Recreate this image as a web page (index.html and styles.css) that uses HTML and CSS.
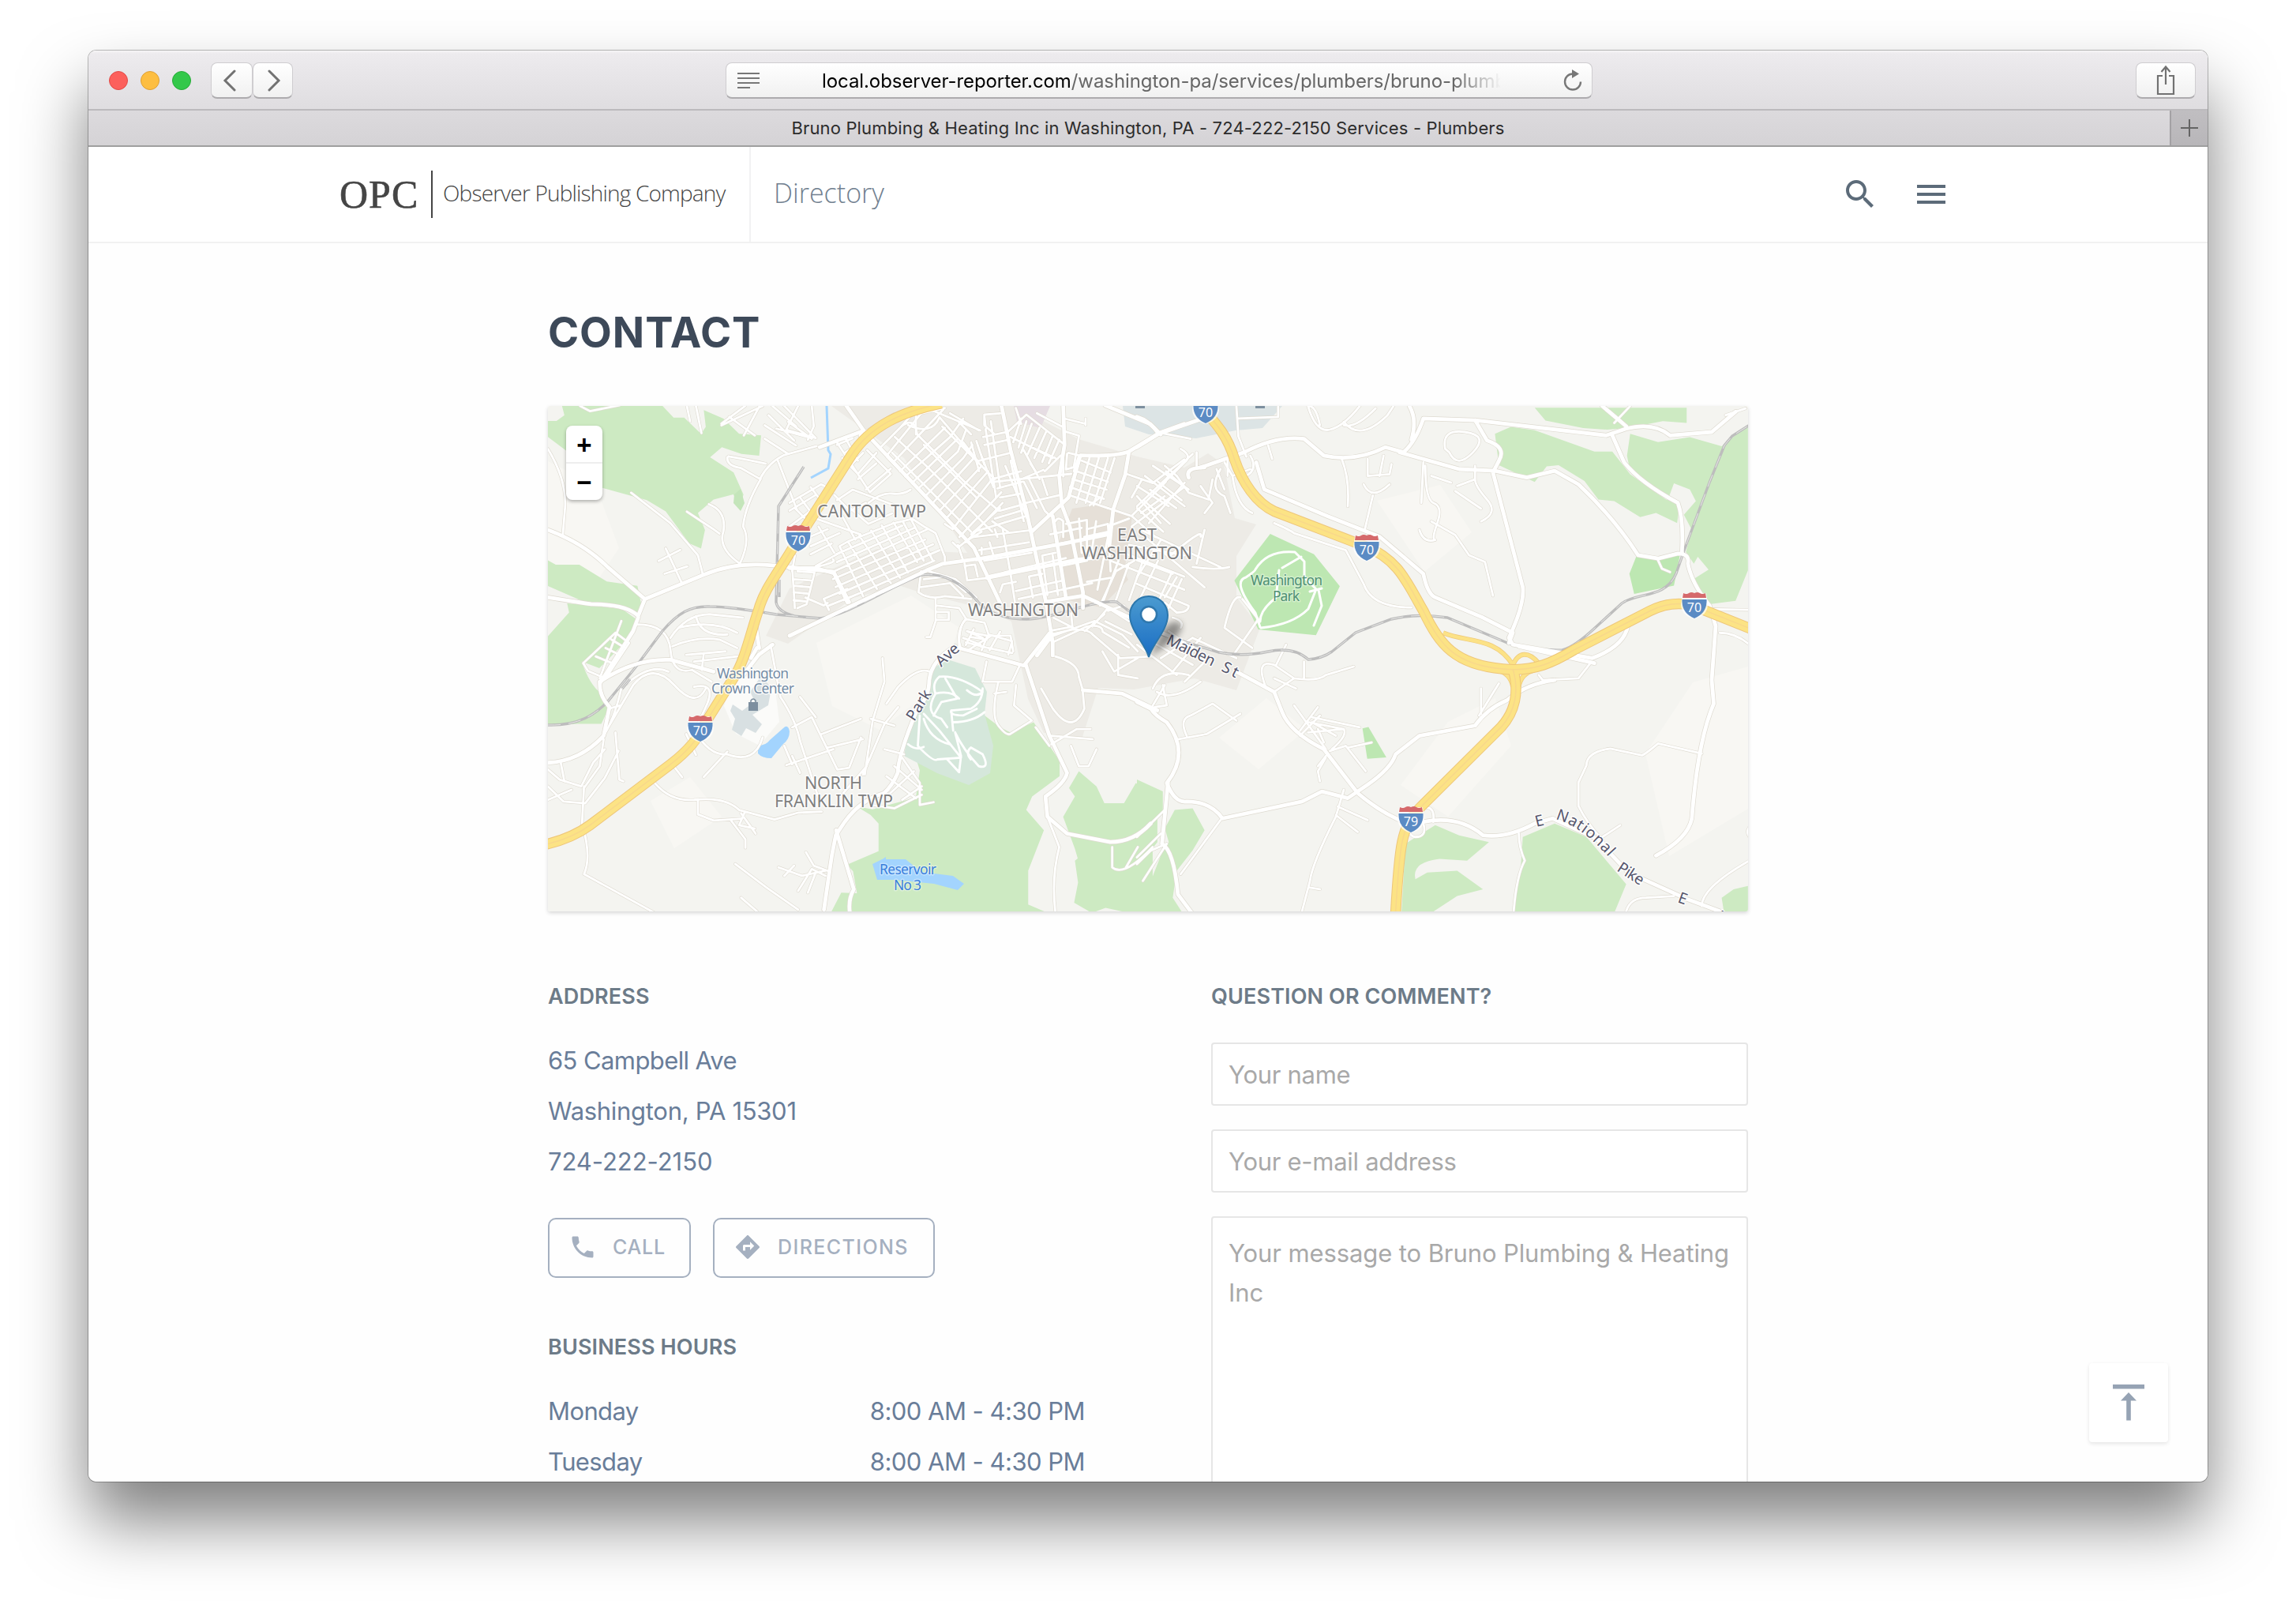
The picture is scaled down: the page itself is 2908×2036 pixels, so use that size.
FILE: index.html
```html
<!DOCTYPE html>
<html lang="en">
<head>
<meta charset="utf-8">
<title>Bruno Plumbing &amp; Heating Inc in Washington, PA</title>
<link rel="stylesheet" href="styles.css">
</head>
<body>
<div class="window">
  <div class="toolbar">
    <div class="lights"><i class="light red"></i><i class="light amber"></i><i class="light green"></i></div>
    <div class="nav">
      <span class="tool back"><svg width="18" height="28" viewBox="0 0 18 28"><path d="M15 2 3 14l12 12"/></svg></span>
      <span class="tool forward"><svg width="18" height="28" viewBox="0 0 18 28"><path d="M3 2l12 12L3 26"/></svg></span>
    </div>
    <div class="address-bar">
      <svg class="reader" width="28" height="20" viewBox="0 0 28 20"><path d="M0 1h28M0 7h28M0 13h28M0 19h16"/></svg>
      <span class="url"><b>local.observer-reporter.com</b>/washington-pa/services/plumbers/bruno-plumb</span>
      <svg class="reload" width="24" height="28" viewBox="0 0 24 28"><path class="ring" d="M12 5.500A10 10 0 1 0 22 15.500"/><path class="tip" d="M11 0v11l9-5.500z"/></svg>
    </div>
    <span class="tool share"><svg width="24" height="40" viewBox="0 0 24 40"><path d="M8 14H2v23h20V14h-6M12 25V3M6.500 9 12 2.500 17.500 9"/></svg></span>
  </div>
  <div class="tabs">
    <div class="tab"><span>Bruno Plumbing &amp; Heating Inc in Washington, PA - 724-222-2150 Services - Plumbers</span></div>
    <div class="new-tab"><svg width="22" height="22" viewBox="0 0 22 22"><path d="M11 0v22M0 11h22"/></svg></div>
  </div>

  <header class="site-header">
    <div class="brand"><span class="opc">OPC</span><i class="bar"></i><span class="company">Observer Publishing Company</span></div>
    <div class="section-name"><span>Directory</span></div>
    <div class="header-icons">
      <svg width="48" height="48" viewBox="0 0 24 24"><path d="M15.500 14h-.79l-.28-.27C15.410 12.590 16 11.110 16 9.500 16 5.910 13.090 3 9.500 3S3 5.910 3 9.500 5.910 16 9.500 16c1.610 0 3.090-.59 4.230-1.570l.27.28v.79l5 4.990L20.490 19l-4.990-5zm-6 0C7.010 14 5 11.990 5 9.500S7.010 5 9.500 5 14 7.010 14 9.500 11.990 14 9.500 14z"/></svg>
      <svg width="48" height="48" viewBox="0 0 24 24"><path d="M3 18h18v-2H3v2zm0-5h18v-2H3v2zm0-7v2h18V6H3z"/></svg>
    </div>
  </header>

  <main class="page">
    <h1>CONTACT</h1>
    <div class="map">
      <svg class="map-canvas" width="1520" height="640" viewBox="0 0 1520 640">
        <defs>
          <g id="shield">
            <path class="shield-edge" d="M-15-16h30l2 14q0 14-17 19-17-5-17-19z"/>
            <path class="shield-red" d="M-14-16q4 2 7 0 3-2 7 0 4-2 7 0 3 2 7 0l1 6h-30z"/>
            <path class="shield-blue" d="M-15.500-8h31q1 17-15.500 24Q-16.500 9-15.500-8z"/>
          </g>
          <linearGradient id="pinfill" x1="0" y1="0" x2="0" y2="1"><stop offset="0" stop-color="#4b9bd0"/><stop offset="1" stop-color="#1a6dc4"/></linearGradient>
          <filter id="soft" x="-50%" y="-50%" width="200%" height="200%"><feGaussianBlur stdDeviation="4"/></filter>
          <path id="national" d="M1276 523C1300 530 1320 545 1346 574"/>

          <g id="minor-west" transform="matrix(.4974 0 0 .4273 -14 -14)">
            <path d="M28 160Q75 250 72 330L66 415M110 33l25 15 75-17M240 290l100 90 70 95 12 55M382 346l65 50 18 15M438 324q45 20 37 80-15 50 42 96M485 185q-2 25 35 32l48 32M488 182q60 12 95 22M568 249Q590 200 630 178L712 152M570 249Q530 330 525 390q20 40-8 110M612 190l50 150M28 600"/>
            <path d="M310 492l55-33M325 530l58-22M328 455l40 100M405 33l14 80M382 33l8 45M470 85l60-52M490 65l65 55M527 120l40-87M575 33L470 90M580 90l80 60M590 60l65 75M600 33l60 60M630 33l80 95M580 130l60 45M610 100l80 25M640 80l60 50M665 33l-30 70 75 25M700 33l5 60-15 40"/>
            <path d="M255 680q80 0 85 75t55 60l50 35M340 720q40-70 100-70l85 10M345 745q60-30 120-20l45 25M405 655q10 60 80 55M360 690q90-25 150 15M380 770l100-10M400 790l110-15M425 765l-5 50"/>
            <path d="M200 705l35 30-60 105-45-22-12-23zM190 725l35 25M175 750l35 20M150 775l38 18M215 670L160 840"/>
            <path d="M28 1160l40 45 55 5 50-75 35-80M28 1110l30 30 55 20 30-70 30-40M60 1085l10 60M120 1160l-5 110q25 100 5 150l180 115M170 1020l-10 80-40 65M200 1000l10 140 10 5M28 1200l60-30M165 1018L245 860q50-70 105 0t80 10M230 855q60-60 105-35M215 870q-20 100-50 148M183 930l30-10"/>
            <path d="M380 1005l25 62M345 1095l25 38M405 1000q35 70 80 65 70 30 90-50M425 1132l60-75M400 865q60-15 30 60l-30 75M300 1150q40 55 100 50 80-10 115 30l90 28 60-20 60-3M410 1198v45l40 18 70-5M495 1262l36 55v25M520 1240l37 60M530 1235l-15 40 40 10"/>
            <path d="M620 895q40 70 50 130l50 180M595 740l25 155M630 1040l20 55M635 1097l120-47M670 895l40 60M650 985l50-30 65 155M725 1005l100-45M740 1045l90-25M850 960l60 20M830 1125l55-150 35-50M885 1050l50 15M880 780l5 70-30 115-20 160M1000 820q-30-15-80 45l-30 50M765 1110l30-5 30-90M650 1070l20 50M780 1180l60-80"/>
            <path d="M890 1130l75 65M910 1100l70 70M930 1075l45 75v65l35-8M900 1180l60-65M930 1200l50-40M850 1215l60 10 70-40"/>
            <path d="M505 1390l80 70 80 65M520 1490l40 40M615 1400l60 25 60-15M655 1395l-25 30M665 1470l35-65 35 20M685 1355l20 40 35 15M690 1475l20-60"/>
            <path d="M1075 745q0-70 20-80l45 10 10 35 60 20-10 40M1095 700l40 20M1085 720l45 20M1100 755l55-40M1130 745l80 20M1140 850h70l20-50M1145 790l-10 60M1175 850q-20 100 0 130t30 25l55-40M1165 885l30-5M1220 860l-5 60 45 45M1270 985l35 55M1310 1010l105 10M1310 1035l65-45 35 0M1360 1040l20 60h25l20-50"/>
            <path d="M1300 1250l30 90q-20 90-10 190M1465 1340v60q30 30 103-60M1500 1400l30-60"/>
            <path d="M1310 710l55-15q40 0 50 15l70 70 80-5M1365 690l-50-30M1395 700l50-50M1320 775q60 20 60 60l10 40M1390 880l4 50q-30 80-80 0l-30-60M1440 760l30 60 60-40M1480 770v60l50 10M1300 720l120-50 70 40 40 50"/>
          </g>
          <g id="golf-paths" transform="matrix(.4974 0 0 .4273 -14 -14)">
            <path d="M1025 835q50-5 110 45-15 20-40-5M1025 835q-20 20-10 50 40-10 60 15M1015 885q-30 60 15 75l15 25M1040 840l30 60-40 10-20 40M1135 870q0 40-30 60l-50 5q-5 15 30 15l35-20M1060 970q50 0 80-30M1055 935l5 60M975 950l-5 90q40 50 50 40l60-5-55-80-40-50M985 960q15 60 65 75M945 1035q20 20 40 8M1065 1000l15 70-5 48-30-38M1065 1000q20 50 60 100 30 10 10-35l-30-20q-15 15 0 35"/>
          </g>
          <g id="major-west" transform="matrix(.4974 0 0 .4273 -14 -14)">
            <path d="M28 400Q120 440 180 510L275 605l150-72q80-40 180-27l150 18 40 90M28 600q80 15 110 20 90 0 120 35l17-50M258 660L245 700l-85 155q0 40 25 70L170 1010q-60 75-142 80M28 1150"/>
            <path d="M160 850q90-70 180-65l110 35"/>
            <path d="M545 780l15-30M560 1100M720 155l110-48M600 740L565 770l-40 60M558 690l8 60"/>
            <path d="M1075 750l165 52 65-95M1065 745q-60 40-66 100 0 50-30 85-50 140-50 190-15 40-35 60-60 20-100 85l-23 40-10 60-20 160M762 1290l45 175q-15 30-10 70"/>
            <path d="M1245 800l60 210 45 110q-5 30-55 70l5 60 50 50 110 25q60 0 103-55"/>
            <path d="M1390 875l100 10 90 50"/>
          </g>
          <g id="minor-town" transform="matrix(.3333 0 0 .3333 306 -4)">
            <path d="M190 545l32-18 170-68 75-18 50 33M178 575l250-108M180 605l295-130M170 640l355-160M165 670l350-150M175 700l370-162M190 725l380-165M205 750l250-110 95-40M130 745l90-38M150 770l100-40M190 545l90 190M222 527l110 180M265 505l120 180M310 485l110 180M350 465l100 180M395 455l90 150M430 450l80 150M460 440l85 160M520 475l35 20 35 90v15M130 745l20 42"/>
            <path d="M10 620l10 160M30 640l65 5-30 120-35 15M15 670l65 5M15 695l60 5M15 720l55 5M15 750l50 5M60 740l70 30 15-10M95 625q90-20 70-30M100 620l90-50"/>
            <path d="M0 380l120-70q30 10 20 30M0 410l100-60M20 400l60 60M40 360l60 80M80 320l30 40M0 470l80-60M80 545l110-50M80 575l80-40M75 510l70-30M100 440l170 60M180 370l60-40 160 60M170 350l60 60 60-30M300 380q50-40 90-35t70-15M230 400l70 60 90-40M20 580l-10 60M110 470l60 100M200 430l50 90"/>
            <path d="M180 150l125 190 80-70-90-90M200 210l60 60 70-80M230 240l50-50M260 290l70-60M290 330l95-80M210 130l50 90M180 160l60-25M210 190l60-40"/>
            <path d="M345 170l80-80 60-70M370 200l130-160 90-20M395 225l190-200M420 260l170-165M440 280l170-150 50-70M465 305l170-165M490 325l150-140 30-80M520 350l140-140 35-50M545 380l155-170M570 410l160-170M595 440l160-180M620 480l150-190M645 510l160-170M670 530l140-150M690 500l110-100"/>
            <path d="M425 90q50-40 60 30l60 60 120 120 130 110M450 85q90 40 120-30l65 75 80 90M400 130l120 110 170 170 80 80M390 190l300 300M370 205l280 290M480 20v100M510 160l200 200M580 90l200 200M545 30l180 75M610 40l110 65M640 70l50 50M660 150l60 80"/>
            <path d="M745 90l-5-45 60-5M765 70l35 250M745 100l40 260M735 130l95-20M740 160l95-20M720 220l120-30M770 290l110-30M790 325l95-25M800 360l80-15M800 410l90-25M780 440l100-30M740 45v40l40 35M690 150l30 110M710 145l30 90M725 190l50 130"/>
            <path d="M830 110l70-65 140 110M840 130l60 30 100 50M880 60l-30 90M900 70l-30 100M920 80l-40 110M950 95l-45 100M975 110l-45 100M1000 125l-40 100M1025 140l-40 90M880 150l130 60M890 180l60 110M940 40l95 50M1050 110l50 15-20 120-30 8 5-60M860 20l20 60M1045 60l80 20v-20M1125 80v5"/>
            <path d="M780 300l290-30M870 295l95-40M890 300l50 100M910 290l60 120 20 20M960 290l20 60M900 380l130-30M935 260l-20-30M970 260l60-60M820 240l100 240M840 220l50 230M770 450l60 40M700 490l200-60M680 520l50-30M700 510l210-25M720 560l190-30M740 600l180-30M730 550v25M760 530l15 50M810 480l30 170 20 130M750 660l300-70M860 715l180-40M870 745l280-60M910 660l15 80M910 660l50-10M960 580l20 150M1000 580l20 150M960 580l50-10M1130 680l90-15M1030 620l100-20M810 690l50-10M800 720l10-30M780 480l10 30"/>
            <path d="M1090 260l120 40M1075 290l130 40M1065 320l130 45M1110 220l110 45M1060 350l150 50M1140 210l-50 170M1175 210l-50 170M1210 210l-55 180M1235 210l-55 170M1060 190l40 10-20 60M1040 200v80"/>
            <path d="M1280 270l100 35 120-90M1300 360l40-70M1210 400l90 30 130-130M1300 430l90 80M1320 400l100 90M1345 370l100 90M1370 330l100 70M1400 300l90 70M1430 260l70 60M1290 440l-80 30M1300 470l200-150M1180 360l-40 30M1230 410l-60 300M1210 460l10 180M1165 450l-20 140M1130 480l80-20M1120 510l90-20"/>
            <path d="M1220 600l280 110M1240 640l70-40M1270 570l230 90M1290 540l210 40M1400 600l-90 190M1350 580l-60 170M1450 650l-60 130M1490 670l-50 110M1240 640l-60 130M1250 600l-60 160M1290 610l-50 140"/>
            <path d="M1100 440l10 130M1130 450v120M1000 540l110-20M990 500l120-25M1010 450q10-20 30 0v60M1050 460l80-15"/>
            <path d="M665 610l10 65 80-10M665 620l40-5 10 45M640 540l20 60M620 530l20 20 50-40M590 460l30 20M500 640l-10 80q40 30 100 15l100 10M510 670l90-10 70 60M530 640l100 30 80 70M500 700l110-15 50 50M555 740v90l-20 60h-15M555 770l90 10 25 40M560 795h45v30h-50"/>
            <path d="M670 820q-40 50-20 110M680 870l70 15 90 0 10 60M690 890l60 10M670 910l60 15M700 860l-30 60M750 890l-20 50M800 870l-40 70"/>
            <path d="M1000 910l130-60q60-10 60 20l100 60M1070 800l5 50-80 15M1150 850l60-70 140 60M1180 760l110 70M1210 790l60-20 40 50M1200 830l100 50"/>
          </g>
          <g id="major-town" transform="matrix(.3333 0 0 .3333 306 -4)">
            <path d="M215 10l70 100L700 550l100 210M270 125l130-80M0 885l140-68 380-180 60-25 130-18"/>
            <path d="M710 595l330-60 170-35M750 665l350-70 50-5M980 755l135-22 385 180"/>
            <path d="M805 10l35 170 60 230 75 350 25 150 0 50M1000 880l-60 80M1040 10l5 150-20 120 10 110 30 80 50 250v60M1000 430l50 310M920 490l140-130 45-160q130 5 185-15l115-70 95-35M1200 10l170 70 40 40M1290 185l-15 90-45 130-15 140"/>
            <path d="M0 628l100 0 70 20 50 110"/>
          </g>
          <g id="minor-east" transform="matrix(.5038 0 0 .4273 746 -14)">
            <path d="M0 330L90 230l50-55M0 270l80 60M20 240l100 90M40 210l90 70M0 300l60 80M10 350l60-50M30 380l90-120M70 210l30 30M0 190"/>
            <path d="M100 240l30 50 50 20 10-60M160 270l30 50-20 30M210 220q-30 60 10 80l15 50M150 170v40M50 110l85 20M110 160q30 20 10 40l-60 70M200 220l20 60"/>
            <path d="M250 33l5 90 20 60M255 70l100-5v-30M330 150l10 40M430 33q20 80 55 70t75-70M460 90q-10-60-30-57M520 80q40 60 110-20l15-27M600 40q-50 60-80 50"/>
            <path d="M515 190q20 60 15 140M580 190v50l55-5 5-30M610 240l10-60M570 265q20 50 65 0M593 298l-20 100M720 200l-5 120M725 210q0 100 20 110 25 10 10 60t-5 50q-30 10-40-30M800 285l65 52M805 270l45-20q0 20 30 60t-15 65M740 240l50 20M850 210v40M740 375l60 40 35 60 40 20 20 100M775 160q-10-60 50-50t20 60-60 0z"/>
            <path d="M1240 33l-40 50M1480 60l50-20"/>
            <path d="M240 240q10 90 50 110M220 200l20 40 45-20M228 190v50M285 180q20 40-10 60"/>
            <path d="M10 400l200 110M0 490l90 40M20 420l150 150M60 430l-60 110M140 510q60 10 92 0M100 540l-30 60M150 500l20-100M80 480q90-90 80-60M0 560l130 65q0 20-30 20l-30-30M90 660q30 10 20 30"/>
            <path d="M345 380q40 20 50 30l130 50 45 100q20 70 120 70M260 600q-20-10-40 90l70 60M265 605l40 60-65 110M215 640M140 720l110 60"/>
            <path d="M0 740l100 90M20 720l120 80M80 700l80 70M60 780l80-60M90 820l70-100M120 850l60-70M40 870q20-60 90-40M50 880q40 30 110-30M40 920l30-60M45 925l30-5-10-60"/>
            <path d="M325 870q-30-90 20-70l50 40-50 40M395 840q60 10 80-10l70-25M350 800l25-60M345 840l55 30M420 840v-50"/>
            <path d="M395 920l80 130M455 925l-45 70M440 955l120 30M430 970l90 20q10 20-30 60M430 1000l90-10M440 970l60 40M455 990l15 40M410 1010l50-60M475 1075l-20 40 5 30M485 1055l40-15 50 75M530 1045l60-15M455 1100l20-30"/>
            <path d="M105 1020l70-15 85-60M125 1010q-20-50 10-60l55-35 60 50M0 1310l70-80M0 1370l60-70M15 1440l60-110-40 20-35 40M210 1260l-100 160M520 1170l-20 80q-60 140-65 190l-20 90M505 1220l75 40M500 1245l55 50M435 1460l25 5"/>
            <path d="M865 945v-75M860 950l50-95M1010 830l10 15 90-5 30-45M720 1225q30-10 25 40M720 1270q10 40-20 40-10 0-20-20"/>
            <path d="M1420 1063l-110-30q-30 30-40 35l-80-20q-60 10-60 50l-20 50 0 70q20 50 60 100l15 40M1170 1310l45-35M1465 705q40 0 75 35M1450 635l90 2M1310 490l10 25 20 10M1540 1380q-120 80-120 135M1230 1530q10-40 50-40l70-5M1540 1280q-10 15 0 30"/>
            <path d="M960 1300q0 40 15 80-20 40-28 150"/>
          </g>
          <g id="major-east" transform="matrix(.5038 0 0 .4273 746 -14)">
            <path d="M0 155l55-40 110-45M0 65q30 10 55 50M160 215l110-45q80-50 150-40l50 50q80 20 155-25l45 15q30-30 50-100l130 5 330 45 50-20q70-20 110 20l105-10q40-40 60-60M685 33q20 40 5 100M660 170l150 50 90 5 80 20 70-20 60 40q90 100 150 210l50 10 50-15q30 0 25 30 10 60 55 125l15 60-10 160 5 70q-40 110-55 340-10 60-90 110M850 75l30 60q50 20 30 60l-15 35 75 340q5 50-35 150l10 20 200 40q90-40 90-110"/>
            <path d="M1170 33l40 40 20 20M1195 120l30 80q40 60 135 120 15 50 10 150"/>
            <path d="M130 245q-10-30 40-30M300 200l20 80 160 80 130 60 110 110q10 60 30 70l120 60 75 45-10 30M960 745l190 50M250 820l95 60 20 60q20 60 105 110l85 130q70 70 140 95M720 1265q90-20 150 40 60 10 130-35l45-15 110 60 80 100 150 80 80 35"/>
            <path d="M0 910l35 20q10 20 40 40 60 90 0 180 20 60 50 55 60 0 90 50l200-50 50-30 65 20 50-40q60-50 70-90l60-55 140-30q30-50 80-75 50-50 120-60"/>
            <path d="M78 1150l-15 180q30 20 40 150l35 55"/>
          </g>
          <g id="rail">
            <path d="M0 404C40 405 60 390 75 375L110 332 145 285C165 262 180 253 205 254 230 254 260 259 289 264L345 269C380 265 430 230 473 214 500 210 525 225 543 246 555 262 580 270 606 270 640 270 690 245 720 248L776 289 850 312Q880 318 912 311T963 321Q980 320 993 311L1023 287 1068 270Q1100 262 1139 268L1215 300Q1250 310 1285 309 1300 305 1325 282L1360 250C1380 235 1415 245 1429 212L1439 183 1471 97 1490 50 1500 38 1522 24M324 77L292 127 289 248Q290 260 312 266M293 220v22M94 358l10-12"/>
          </g>
          <g id="interstate">
            <g transform="matrix(.4974 0 0 .4273 -14 -14)"><path d="M20 1333C60 1322 100 1305 135 1275L340 1095C385 1055 410 1020 430 970L500 840C530 790 545 700 565 635 580 570 620 520 665 427L800 180C850 90 930 50 1030 25"/></g>
            <g transform="matrix(.5038 0 0 .4273 746 -14)"><path d="M150 20C190 75 225 110 245 190 265 260 300 320 345 345L577 450C660 490 680 560 720 640 760 740 800 800 920 812 1000 822 1050 790 1100 755L1290 640C1340 610 1390 615 1420 635L1545 694"/><path d="M945 812C962 880 950 940 915 985L710 1225C665 1280 660 1330 650 1540"/></g>
          </g>
          <g id="ramps" transform="matrix(.5038 0 0 .4273 746 -14)"><path d="M770 705C830 735 900 715 945 800 960 760 985 760 1010 795M905 815q35 10 40 50M1000 815q-35 10-40 50"/></g>
        </defs>

        <rect class="land" width="1520" height="640"/>
        <g class="relief">
          <path d="M0 70l60 30 30 80-40 60-50-30zM340 300l120-60 60 40-20 70-80 60-60-30zM130 500l50-30 40 50-60 40zM1080 480l60-80 60-30 20 60-80 90zM1390 440l60-90 70-20v180l-100 60zM1050 120l80-20 40 60-60 50zM850 420l60-50 50 40-60 50z"/>
        </g>
        <path class="urban" d="M359 0H590l82 42 74 22 60 14 30-18 20 14 14 68 27 8-25 40v52l30 39-30 79-53-15-77 14-45-2-20 62-49-5-20-43-21-98-30-15-80-20-30-10-60 15-83 58-28-10 30-60 110-50 115 5-80-120z"/>
        <path class="industry" d="M728 0h202l-25 28-34 3-50 10-60-5-30-10z"/>
        <path class="campus" d="M590 0h46l-12 28-30-8z"/>
        <path class="civic" d="M664 130l34-5 42 15-10 70 5 10-35 35-46-10-10-65z"/>
        <g class="wood">
          <path transform="matrix(.4974 0 0 .4273 -14 -14)" d="M64 33h256l28 34h27l43 48 12-20-5-50 50 25 40 45 56 5-5 60-45-5-50-20-30 30 60 45 25 65-8 35-18-35-50 15-40 40 18 50-10 55-30-15-60-95-48-33-125-40-50-80-80-70-17-10-35-35H50l20-17zM28 490l20 13h60l70 50 78 13 10 55-10 30-50-30-80-5-98-50zM28 715l54-70-5-27 60 5 80 12 37 30-15 50-80 95-45-20q20 70 50 95l20 40-20 50-60 0-76 5zM1140 950l40 35 25 15 60-30 66 115v45l-70 60-15 40 45 60-40 120v100l60 30 28 25H735l40-90 40 2-10-65-15-20 80-40V1270l-20-25-35-25 40 8 110-35 10-80-8-30zM1340 1250l30-60 -15-25 25-50 45 45 20 50h50l30-60 55 35v140l-40 60-60 20-100-20-10-40zM1370 1380l65-60h133v215h-60l-60-15-35 15-45-30 10-60z"/>
          <path transform="matrix(.5038 0 0 .4273 746 -14)" d="M1000 38h382v45l-60-5-90 20-50 5-60-5-95-22zM900 115L940 95 1000 105 1150 168H1195L1240 235 1330 310 1365 320 1358 380 1305 350 1265 362 1200 315 1160 310 1125 255 1060 208 1030 212 1000 258 910 208zM1240 115L1310 140 1390 125 1470 152 1536 90V520L1505 610 1440 620 1400 545 1437 518 1410 480 1400 500 1380 465 1395 400 1375 355 1405 315 1390 280 1350 262 1338 300 1240 225 1232 180zM0 1140l65 35 0 60-65 60zM95 1230l45-5 30 65-30 60-40 60-10 80 30 55H0v-80l40-40 20-60 20-40-10-40zM675 1330l75-55 60 30 75 20-55 55-70-5q-70 10-60 60l30-20 75-5 65 55-65 20-65 50h-75zM970 1310l80-40 80 40 100 140-30 85H945l20-140zM1470 1490l30-25 36-10v80h-60z"/>
        </g>
        <g class="park">
          <path transform="matrix(.5038 0 0 .4273 746 -14)" d="M335 412l110 60 65 95-60 145-145-17-60-145zM1255 480l110-5-15 90-100 25-12-60zM567 988l15-4 45 90-48 4z"/>
          <path class="glade" d="M236 112l8-7 5 18-5 10-9-10z"/>
        </g>
        <path class="golf" d="M506 321l35 11 15 30-3 28 11 40-4 35-27 15-40-15-42-22 5-30 27-51 5-30z"/>
        <g class="water">
          <path d="M298 408q6-6 8 4 0 10-8 16l-15 18q-12 0-17-6v-10q10 0 15-7zM411 580l12-6h30l20 16 40 5 14 10-8 8-30-8-50-5h-22zM422 575l6-4v10z"/>
          <path class="stream" d="M353 0l2 56 3 5-3 18-22 12"/>
        </g>
        <g class="mall"><path d="M233 350l25-10 30 20 5 40-25 30-30-15-15-35z"/></g>
        <path class="mall-building" d="M234 378l12 8 16-12-6-12 14-20 13 15-4 22-20 12 12 12-8 11-12-6-6 10-12-8 4-14-6-10z"/>

        <g class="casing minor"><use href="#minor-west"/><use href="#minor-town"/><use href="#minor-east"/></g>
        <g class="casing major"><use href="#major-west"/><use href="#major-town"/><use href="#major-east"/></g>
        <g class="fill minor"><use href="#minor-west"/><use href="#minor-town"/><use href="#minor-east"/><use href="#golf-paths"/></g>
        <use class="rail-base" href="#rail"/><use class="rail-dash" href="#rail"/>
        <g class="fill major"><use href="#major-west"/><use href="#major-town"/><use href="#major-east"/></g>
        <g class="road park-road"><path d="M902 280l-6-18q-30-40-12-45 12-8 12-10 15-25 50-22l12 12v20M930 205l24-14M926 208l-4 35q-20 15-20 30M958 217l15 15-10 25q-20 20-60 24M965 235l15-4M970 278l10-25-4-20"/></g>
        <use class="ramp-casing" href="#ramps"/><use class="ramp-fill" href="#ramps"/>
        <use class="hwy-casing" href="#interstate"/><use class="hwy-fill" href="#interstate"/><use class="hwy-mid" href="#interstate"/>

        <g class="poi"><path d="M254 375h12v11h-12zM744 0h12v3h-12zM896 0h12v3h-12z"/><path class="handle" d="M257 376v-3q3-4 6 0v3"/></g>

        <g class="place">
          <text x="341" y="141" textLength="138">CANTON TWP</text>
          <text x="721" y="171" textLength="50">EAST</text>
          <text x="676" y="194" textLength="140">WASHINGTON</text>
          <text x="532" y="266" textLength="140">WASHINGTON</text>
          <text x="325" y="485" textLength="73">NORTH</text>
          <text x="287" y="508" textLength="150">FRANKLIN TWP</text>
        </g>
        <g class="spot mall-name"><text x="214" y="345" textLength="91">Washington</text><text x="207" y="364" textLength="105">Crown Center</text></g>
        <g class="spot park-name"><text x="890" y="227" textLength="91">Washington</text><text x="918" y="247" textLength="34">Park</text></g>
        <g class="spot water-name"><text x="420" y="593" textLength="72">Reservoir</text><text x="438" y="613" textLength="35">No 3</text></g>
        <g class="street">
          <text transform="translate(782 301) rotate(26)" textLength="66">Maiden</text>
          <text transform="translate(852 335) rotate(27)" textLength="21">St</text>
          <text transform="translate(464 400) rotate(-58)" textLength="42">Park</text>
          <text transform="translate(498 331) rotate(-42)" textLength="33">Ave</text>
          <text transform="translate(1252 533) rotate(-14)">E</text>
          <text><textPath href="#national" textLength="84">National</textPath></text>
          <text transform="translate(1353 588) rotate(33)" textLength="36">Pike</text>
          <text transform="translate(1430 628) rotate(20)">E</text>
          <text transform="translate(1480 651) rotate(22)">N</text>
        </g>
        <g class="shield">
          <g transform="translate(317 168)"><use href="#shield"/><text y="8">70</text></g>
          <g transform="translate(193 409)"><use href="#shield"/><text y="8">70</text></g>
          <g transform="translate(833 6)"><use href="#shield"/><text y="8">70</text></g>
          <g transform="translate(1037 180)"><use href="#shield"/><text y="8">70</text></g>
          <g transform="translate(1452 253)"><use href="#shield"/><text y="8">70</text></g>
          <g transform="translate(1093 524)"><use href="#shield"/><text y="8">79</text></g>
        </g>
        <path class="pin-shadow" d="M762 318l16-34q14-16 24-8 2 10-12 22z"/>
        <path class="pin" d="M761 318c-4-16-24-34-24-53a24 24 0 0 1 48 0c0 19-20 37-24 53z"/>
        <circle class="pin-hole" cx="761" cy="264" r="10"/>
      </svg>
      <div class="zoom"><span>+</span><span>−</span></div>
    </div>

    <div class="columns">
      <section>
        <h2>ADDRESS</h2>
        <p class="street-line">65 Campbell Ave</p>
        <p>Washington, PA 15301</p>
        <p class="phone">724-222-2150</p>
        <div class="actions">
          <a class="button call"><svg width="36" height="36" viewBox="0 0 24 24"><path d="M6.620 10.790c1.440 2.830 3.760 5.140 6.590 6.590l2.200-2.200c.27-.27.67-.36 1.020-.24 1.120.37 2.330.57 3.570.57.55 0 1 .45 1 1V20c0 .55-.45 1-1 1-9.390 0-17-7.610-17-17 0-.55.45-1 1-1h3.500c.55 0 1 .45 1 1 0 1.250.2 2.450.57 3.570.11.35.03.74-.25 1.020l-2.200 2.200z"/></svg><span>CALL</span></a>
          <a class="button directions"><svg width="36" height="36" viewBox="0 0 24 24"><path d="M21.710 11.290l-9-9c-.39-.39-1.020-.39-1.410 0l-9 9c-.39.39-.39 1.020 0 1.410l9 9c.39.39 1.020.39 1.410 0l9-9c.39-.38.39-1.010 0-1.410zM14 14.500V12h-4v3H8v-4c0-.55.45-1 1-1h5V7.500l3.500 3.500-3.500 3.500z"/></svg><span>DIRECTIONS</span></a>
        </div>
        <h2>BUSINESS HOURS</h2>
        <div class="hours"><span>Monday</span><span class="time">8:00 AM - 4:30 PM</span></div>
        <div class="hours"><span>Tuesday</span><span class="time">8:00 AM - 4:30 PM</span></div>
      </section>
      <section>
        <h2 class="ask">QUESTION OR COMMENT?</h2>
        <div class="field name">Your name</div>
        <div class="field email">Your e-mail address</div>
        <div class="field message">Your message to Bruno Plumbing &amp; Heating Inc</div>
      </section>
    </div>
  </main>

  <div class="to-top"><svg width="40" height="46" viewBox="0 0 40 46"><path d="M0 0h40v5.600H0zM20 10l10 10.500h-7.200V45.500h-5.600V20.500H10z"/></svg></div>
</div>
</body>
</html>
```
FILE: styles.css
```css
* { box-sizing: border-box; }
body { margin: 0; padding: 64px 112px 160px; background: #fff; font-family: Inter, "Liberation Sans", sans-serif; height: 2036px; overflow: hidden; }
svg { display: block; flex: none; }
.window { position: relative; width: 2684px; height: 1812px; overflow: hidden; border-radius: 10px; background: #fefefe; }
body::before { content: ""; position: absolute; left: 112px; top: 64px; width: 2684px; height: 1812px; border-radius: 10px; box-shadow: 0 0 0 1px rgba(0,0,0,.26), 0 50px 84px rgba(0,0,0,.5); }

/* Browser chrome */
.toolbar { display: flex; align-items: flex-start; height: 76px; padding: 15px 15px 0 26px; background: linear-gradient(#f6f5f6 0, #edebee 4px, #dfdde0 100%); border-bottom: 2px solid #bcbabd; }
.lights { display: flex; gap: 16px; padding-top: 11px; width: 129px; }
.light { width: 24px; height: 24px; border-radius: 50%; border: 1px solid; }
.red { background: #fc605c; border-color: #e24a47; }
.amber { background: #fdbe41; border-color: #dfa033; }
.green { background: #34c84a; border-color: #26ab36; }
.nav { display: flex; width: 652px; }
.tool, .address-bar { display: flex; align-items: center; justify-content: center; height: 46px; border: 1px solid #cfcdd0; border-bottom: 2px solid #adabae; border-radius: 8px; background: linear-gradient(#fff, #f1f1f1); }
.tool path { fill: none; stroke: #727272; stroke-width: 3; stroke-linecap: round; }
.back { width: 53px; padding-right: 6px; }
.forward { width: 51px; padding-left: 2px; }
.address-bar { width: 1098px; justify-content: flex-start; padding: 0 12px 0 14px; }
.reader path { stroke: #777; stroke-width: 2; }
.url { width: 868px; margin: 0 auto 0 79px; padding-top: 2px; white-space: nowrap; overflow: hidden; font-size: 24px; letter-spacing: -.08px; color: #666; -webkit-mask-image: linear-gradient(90deg, #000 800px, transparent 860px); mask-image: linear-gradient(90deg, #000 800px, transparent 860px); }
.url b { font-weight: 400; color: #000; }
.ring { fill: none; stroke: #777; stroke-width: 2.4; }
.tip { fill: #777; }
.share { width: 76px; margin-left: auto; }
.share path { stroke-width: 2.2; stroke-linecap: butt; }
.tabs { display: flex; height: 46px; border-bottom: 2px solid #9f9f9f; }
.tab { flex: 1; display: flex; justify-content: center; align-items: center; background: linear-gradient(#dcdadd, #d5d3d6); font-size: 22px; color: #2c2c2c; }
.tab span { padding-left: 48px; letter-spacing: .15px; white-space: nowrap; }
.new-tab { display: flex; align-items: center; justify-content: center; width: 48px; border-left: 2px solid #a3a1a4; background: linear-gradient(#c0bec1, #b8b6b9); }
.new-tab path { stroke: #646464; stroke-width: 2; }

/* Site header */
.site-header { display: flex; align-items: center; height: 122px; padding: 0 326px 0 318px; border-bottom: 2px solid #f1f1f1; background: #fff; }
.brand { display: flex; align-items: center; width: 521px; height: 100%; border-right: 2px solid #f2f2f3; color: #454545; }
.opc { width: 116px; font: 50px/60px "Liberation Serif", serif; letter-spacing: 1px; -webkit-text-stroke: .6px #454545; }
.bar { width: 2px; height: 60px; background: #454545; margin-right: 13px; }
.company { font: 300 28px/60px "Open Sans", sans-serif; letter-spacing: -.82px; white-space: nowrap; padding-bottom: 5px; }
.section-name { flex: 1; padding: 0 0 4px 29px; font: 300 34px/60px "Open Sans", sans-serif; color: #71808f; }
.header-icons { display: flex; gap: 42px; fill: #5c6b79; }

/* Page */
.page { padding: 0 582px; }
h1 { margin: 0; padding: 79px 0 59px; font-size: 53px; line-height: 68px; font-weight: 700; letter-spacing: .9px; color: #3d4959; }
.map { position: relative; height: 640px; border-radius: 3px; box-shadow: 0 2px 5px rgba(0,0,0,.16); }
.zoom { position: absolute; left: 23px; top: 25px; width: 46px; border-radius: 8px; background: #fff; box-shadow: 0 2px 4px rgba(0,0,0,.3); font: bold 33px/50px "Liberation Sans", sans-serif; color: #000; text-align: center; }
.zoom span { display: block; height: 46px; }
.zoom span + span { border-top: 2px solid #eee; height: 48px; line-height: 47px; }
.columns { display: grid; grid-template-columns: 680px 680px; justify-content: space-between; padding-top: 88px; }
h2 { margin: 0; font-size: 27px; line-height: 40px; font-weight: 600; letter-spacing: .12px; color: #6d7b88; }
p { margin: 0; font-size: 31px; line-height: 64px; color: #697d99; letter-spacing: -.3px; }
.street-line { letter-spacing: -.6px; }
.phone { letter-spacing: -.05px; }
h2 + p { padding-top: 29px; }
.actions { display: flex; gap: 28px; padding: 39px 0 68px; }
.button { display: flex; align-items: center; height: 76px; border: 2px solid #a5b0c0; border-radius: 10px; color: #a5b0c0; fill: #a5b0c0; padding: 0 0 2px 24px; font-size: 25px; font-weight: 500; }
.call { width: 181px; }
.directions { width: 281px; }
.button span { padding-left: 20px; letter-spacing: 1.4px; }
.call span { letter-spacing: .8px; }
.hours { display: flex; justify-content: space-between; font-size: 31px; line-height: 64px; color: #697d99; letter-spacing: -.6px; }
h2 + .hours { padding-top: 29px; }
.time { letter-spacing: -.53px; }
.field { height: 80px; margin-bottom: 30px; padding: 14px 20px; border: 2px solid #e6e6e6; border-radius: 4px; background: #fff; font-size: 31px; line-height: 50px; color: #a9a9a9; letter-spacing: -.28px; }
.ask { margin-bottom: 38px; }
.message { height: 440px; padding-top: 20px; letter-spacing: -.1px; }
.to-top { position: absolute; left: 2534px; top: 1662px; width: 100px; height: 100px; padding: 27px 0 0 30px; border-radius: 4px; background: #fff; box-shadow: 0 2px 5px rgba(0,0,0,.1); fill: #96a3b4; }

/* Map */
.map-canvas { border-radius: 3px; }
.map-canvas path { vector-effect: non-scaling-stroke; }
.land { fill: #f4f4f0; }
.relief { fill: #f8f7f3; }
.urban { fill: #edebe6; }
.industry { fill: #dce4e5; }
.campus { fill: #e6dde3; }
.civic { fill: #e6e0d8; }
.wood { fill: #cdeac2; }
.park { fill: #bde7b2; }
.glade { fill: #c4e5ba; }
.golf { fill: #d5e7db; }
.water { fill: #a3d4fe; }
.stream { fill: none; stroke: #a3d4fe; stroke-width: 3; }
.mall { fill: #fbfbf9; }
.mall-building { fill: #d8e0e2; }
.casing, .fill, .road { fill: none; stroke-linejoin: round; stroke-linecap: round; }
.casing { stroke: #dedad0; }
.fill, .road { stroke: #fff; }
.casing.minor { stroke-width: 4; }
.fill.minor { stroke-width: 2.8; }
.casing.major { stroke-width: 6.2; }
.fill.major { stroke-width: 4.8; }
.park-road { stroke-width: 3; }
.rail-base, .rail-dash { fill: none; stroke: #bdbdbd; stroke-width: 3.4; }
.rail-dash { stroke: #e6e6e4; stroke-width: 1; stroke-dasharray: 16 10; }
.ramp-casing, .ramp-fill, .hwy-casing, .hwy-fill, .hwy-mid { fill: none; }
.ramp-casing { stroke: #efcb7c; stroke-width: 6; }
.ramp-fill { stroke: #fce286; stroke-width: 4.6; }
.hwy-casing { stroke: #eec67a; stroke-width: 13.500; }
.hwy-fill { stroke: #fce385; stroke-width: 11.500; }
.hwy-mid { stroke: #f8d88b; stroke-width: 1.500; }
.poi { fill: #7d8f9f; }
.handle { fill: none; stroke: #7d8f9f; stroke-width: 1.500; }
.map-canvas text { font-family: "Noto Sans", sans-serif; paint-order: stroke; stroke: rgba(255,255,255,.8); stroke-width: 3; stroke-linejoin: round; }
.place { font-size: 21.500px; fill: #808080; }
.spot { font-size: 17.500px; }
.mall-name { fill: #748ca6; }
.park-name { fill: #4f8f74; }
.map-canvas .park-name text, .map-canvas .water-name text { stroke: rgba(255,255,255,.35); }
.water-name { fill: #3a7fdc; }
.street { font-size: 19.500px; fill: #56566c; }
.shield-edge { fill: #fff; fill-opacity: .7; }
.shield-red { fill: #d5696b; }
.shield-blue { fill: #5b8bc4; }
.map-canvas .shield text { font-size: 16px; fill: #fff; stroke: none; text-anchor: middle; }
.pin-shadow { fill: #000; opacity: .4; filter: url(#soft); }
.pin { fill: url(#pinfill); stroke: #2b76ac; stroke-width: 2; }
.pin-hole { fill: #fff; stroke: #2f78ae; stroke-width: 2.500; }
```
